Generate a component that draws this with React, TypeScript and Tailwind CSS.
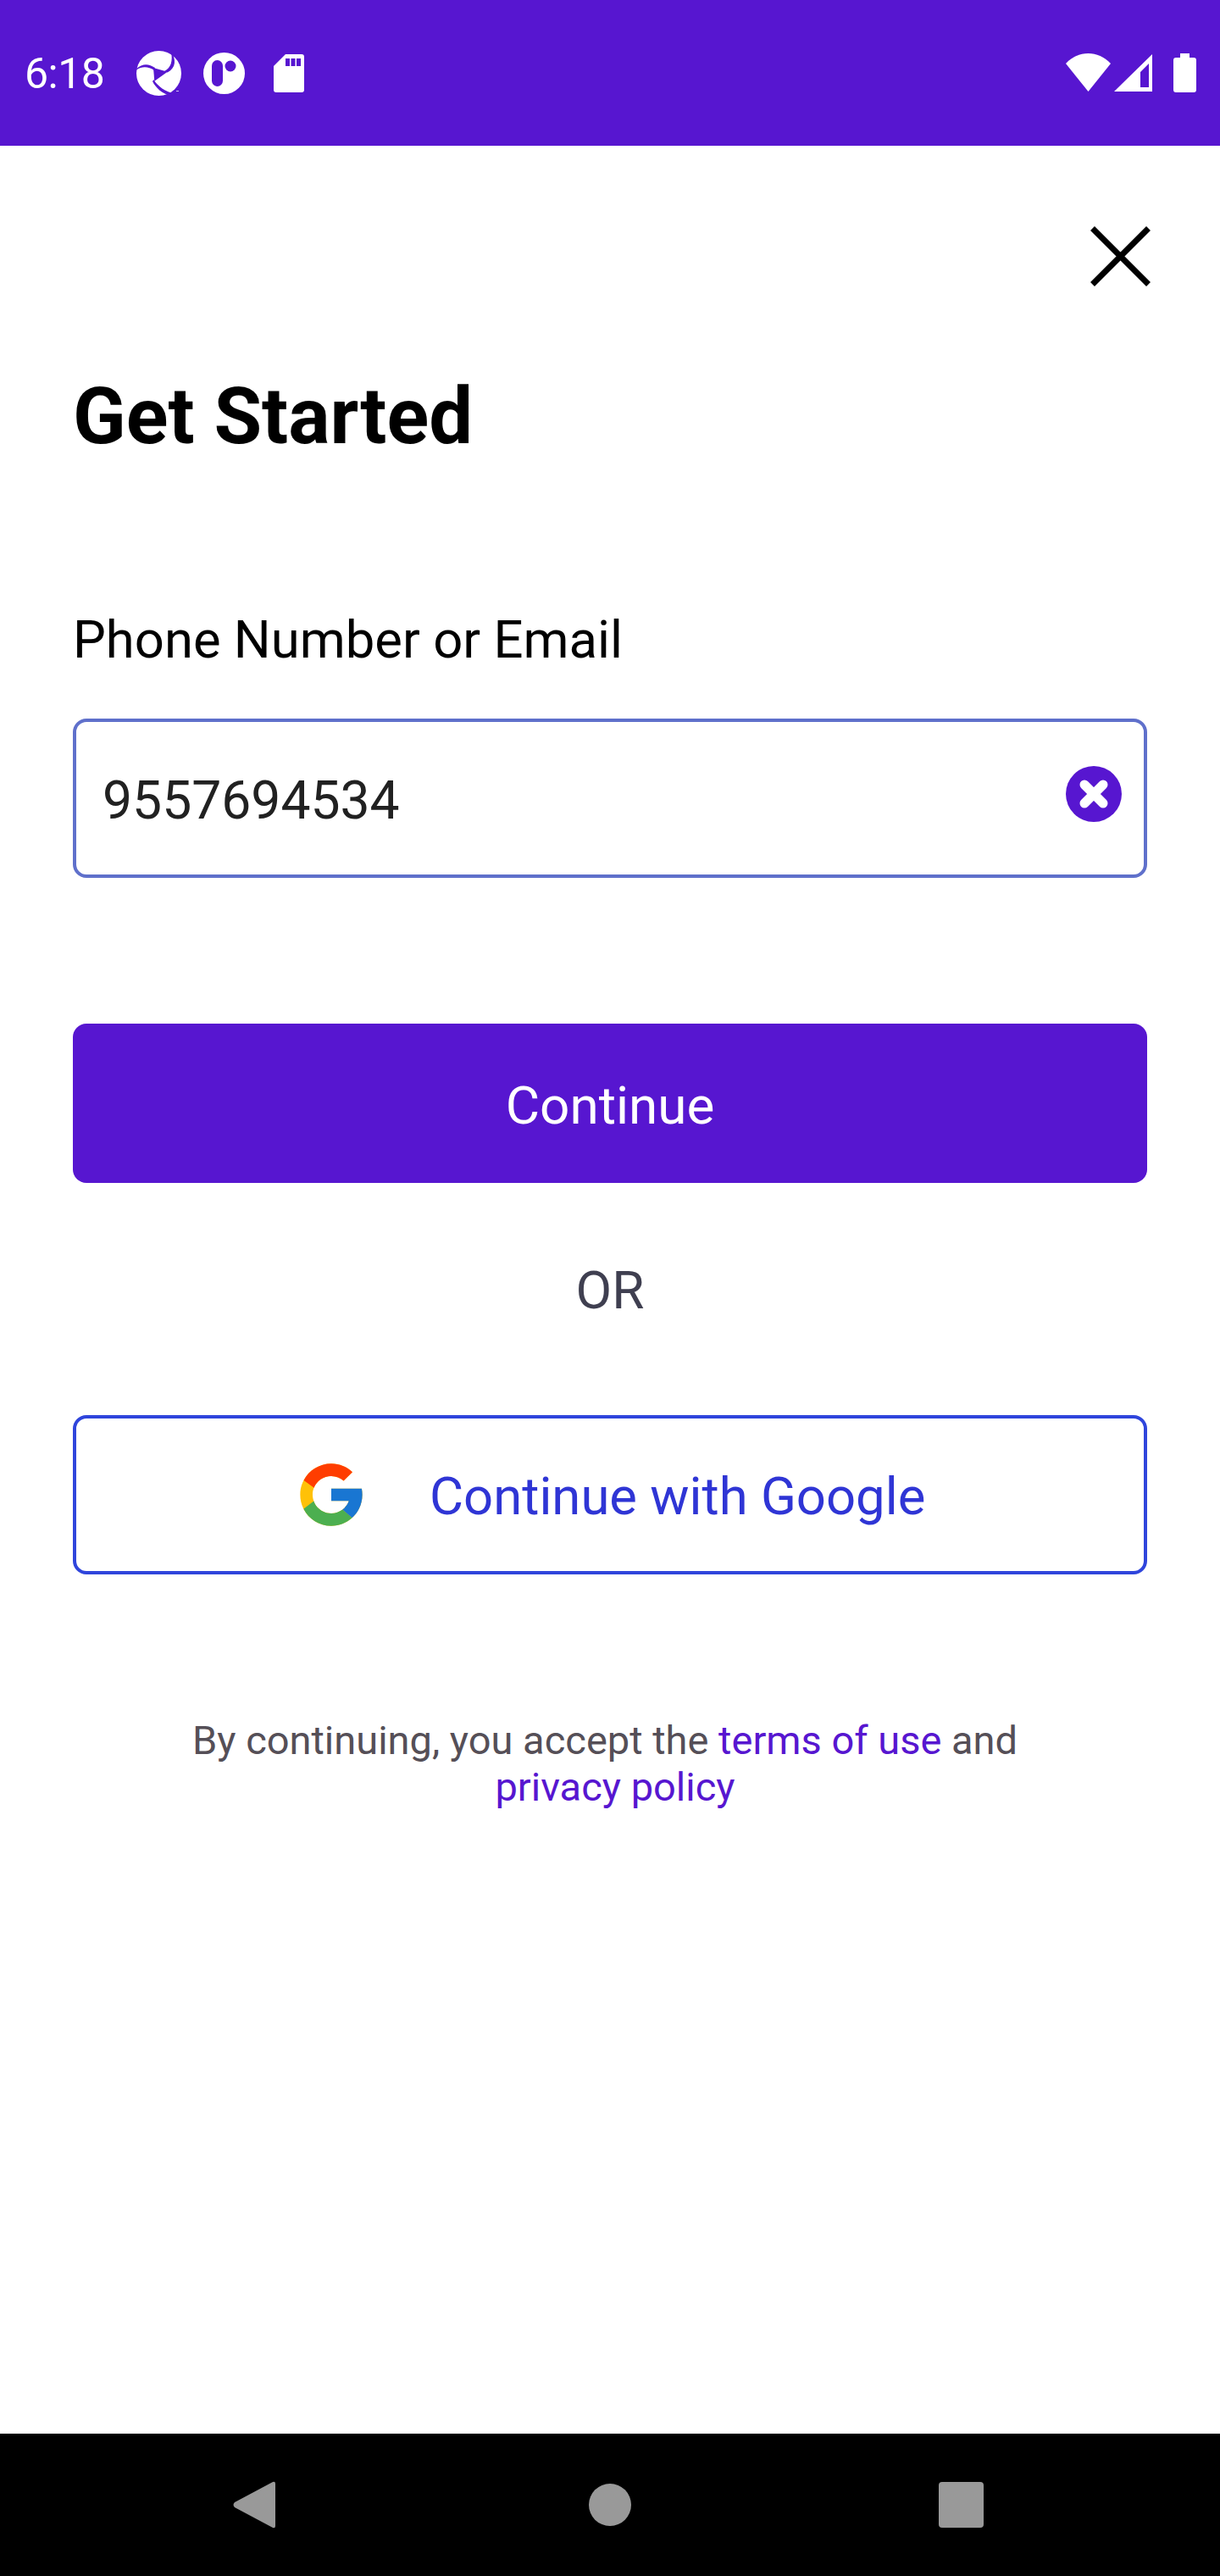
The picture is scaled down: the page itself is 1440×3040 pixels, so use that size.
import React from "react";

const PURPLE = "#5716d0";

function StatusBar() {
  return (
    <div className="h-[172px] shrink-0 bg-[#5716d0] flex items-start text-white">
      <span className="ml-[29px] mt-[62px] text-[50px] leading-[50px] tracking-[-0.5px] w-[132px] shrink-0">6:18</span>
      <svg className="mt-[60px] shrink-0 overflow-visible" width="53" height="53" viewBox="0 0 53 53">
        <circle cx="26.5" cy="26.5" r="26.5" fill="white" />
        <path d="M20 20 L36.7 24.7 L21.3 35.7Z" fill="#5716d0" />
        <path d="M0 21 C7 15 14 14.5 22 20 L21 23 C14 18.5 7 18 0 22.5Z" fill="#5716d0" />
        <path d="M41 1 C47 10 47 20 36.7 25.5 L33 24 C41 20 43 12 41 1Z" fill="#5716d0" />
        <path d="M20.5 34 C25 42 34 48 46 51 L40 53 C30 50 23 44 19 36Z" fill="#5716d0" />
        <rect x="47" y="47" width="3" height="1" fill="white" opacity="0.7" />
      </svg>
      <svg className="ml-[26px] mt-[62px] shrink-0" width="49" height="49" viewBox="0 0 49 49">
        <circle cx="24.5" cy="24.5" r="24.5" fill="white" />
        <rect x="10" y="9" width="13" height="31" rx="6.5" fill="#5716d0" />
        <circle cx="32" cy="16" r="6.5" fill="#5716d0" />
      </svg>
      <svg className="ml-[34px] mt-[64px] shrink-0" width="36" height="45" viewBox="0 0 36 45">
        <path d="M14 0 H33 Q36 0 36 3 V42 Q36 45 33 45 H3 Q0 45 0 42 V14Z" fill="white" />
        <rect x="14" y="5" width="5" height="9" fill="#5716d0" />
        <rect x="20.5" y="5" width="5" height="9" fill="#5716d0" />
        <rect x="27" y="5" width="5" height="9" fill="#5716d0" />
      </svg>
      <div className="ml-auto mr-[28px] mt-[63px] flex items-start">
        <svg className="shrink-0" width="53" height="45" viewBox="0 0 53 45">
          <path d="M0 12 C15 -4 38 -4 53 12 L26.5 45Z" fill="white" />
        </svg>
        <svg className="ml-[4px] mt-[1px] shrink-0" width="45" height="44" viewBox="0 0 45 44">
          <path fillRule="evenodd" d="M45 0 V44 H0Z M31 21 V39 H41 V11Z" fill="white" />
        </svg>
        <svg className="ml-[25px] shrink-0" width="27" height="46" viewBox="0 0 27 46">
          <path d="M8 0 H19 V5 H24 Q27 5 27 8 V43 Q27 46 24 46 H3 Q0 46 0 43 V8 Q0 5 3 5 H8Z" fill="white" />
        </svg>
      </div>
    </div>
  );
}

function GoogleLogo() {
  return (
    <svg width="88" height="88" viewBox="0 0 48 48" className="shrink-0">
      <path fill="#FFC107" d="M43.611,20.083H42V20H24v8h11.303c-1.649,4.657-6.08,8-11.303,8c-6.627,0-12-5.373-12-12c0-6.627,5.373-12,12-12c3.059,0,5.842,1.154,7.961,3.039l5.657-5.657C34.046,6.053,29.268,4,24,4C12.955,4,4,12.955,4,24c0,11.045,8.955,20,20,20c11.045,0,20-8.955,20-20C44,22.659,43.862,21.35,43.611,20.083z" />
      <path fill="#FF3D00" d="M6.306,14.691l6.571,4.819C14.655,15.108,18.961,12,24,12c3.059,0,5.842,1.154,7.961,3.039l5.657-5.657C34.046,6.053,29.268,4,24,4C16.318,4,9.656,8.337,6.306,14.691z" />
      <path fill="#4CAF50" d="M24,44c5.166,0,9.86-1.977,13.409-5.192l-6.19-5.238C29.211,35.091,26.715,36,24,36c-5.202,0-9.619-3.317-11.283-7.946l-6.522,5.025C9.505,39.556,16.227,44,24,44z" />
      <path fill="#1976D2" d="M43.611,20.083H42V20H24v8h11.303c-0.792,2.237-2.231,4.166-4.087,5.571c0.001-0.001,0.002-0.001,0.003-0.002l6.19,5.238C36.971,39.205,44,34,44,24C44,22.659,43.862,21.35,43.611,20.083z" />
    </svg>
  );
}

export default function App() {
  return (
    <div className="w-[1440px] h-[3040px] flex flex-col bg-white overflow-hidden font-['Roboto',sans-serif]">
      <StatusBar />
      <main className="flex-1 flex flex-col px-[86px]">
        <div className="flex justify-end pt-[95px] -mr-[4px]">
          <svg width="71" height="71" viewBox="0 0 71 71">
            <path d="M2.5 2.5 L68.5 68.5 M68.5 2.5 L2.5 68.5" stroke="black" strokeWidth="7" fill="none" />
          </svg>
        </div>
        <h1 className="mt-[102px] text-[92px] leading-[104px] font-bold text-black">Get Started</h1>
        <label className="mt-[175px] text-[61.6px] leading-[72px] text-black">Phone Number or Email</label>
        <div className="mt-[57px] h-[188px] border-[4px] border-[#5f70cb] rounded-[16px] flex items-center pl-[31px] pr-[26px]">
          <span className="flex-1 mt-[6px] text-[62.4px] leading-[72px] text-[#212121]">9557694534</span>
          <svg className="-mt-[10px] shrink-0" width="66" height="66" viewBox="0 0 66 66">
            <circle cx="33" cy="33" r="33" fill={PURPLE} />
            <path d="M22 22 L44 44 M44 22 L22 44" stroke="white" strokeWidth="11" strokeLinecap="round" />
          </svg>
        </div>
        <button className="mt-[172px] h-[188px] rounded-[16px] bg-[#5716d0] text-white text-[62px] leading-[72px] flex items-center justify-center">
          <span className="mt-[6px]">Continue</span>
        </button>
        <div className="mt-[92px] text-center text-[62px] leading-[70px] text-[#3f3f50]">OR</div>
        <button className="mt-[112px] h-[188px] border-[4px] border-[#2f45dc] rounded-[16px] flex items-center pl-[257px]">
          <GoogleLogo />
          <span className="ml-[72px] mt-[4px] text-[61.6px] leading-[72px] text-[#2f35d5]">Continue with Google</span>
        </button>
        <p className="mt-[168px] text-center text-[47px] leading-[55px] text-[#554f57]">
          <span className="block -ml-[12px]">
            By continuing, you accept the <span className="text-[#5716d0]">terms of use</span> and
          </span>
          <span className="block ml-[12px] text-[#5716d0]">privacy policy</span>
        </p>
      </main>
      <div className="h-[168px] shrink-0 bg-black flex items-center justify-center relative">
        <div className="w-[1440px] flex items-center pl-[275px]">
          <svg width="50" height="56" viewBox="0 0 50 56">
            <path d="M47 1 Q50 0 50 3 V53 Q50 56 47 55 L2 31 Q-1 28 2 25Z" fill="#999999" />
          </svg>
          <div className="ml-[370px] w-[50px] h-[50px] rounded-full bg-[#999999]" />
          <div className="ml-[363px] w-[53px] h-[54px] rounded-[4px] bg-[#999999]" />
        </div>
      </div>
    </div>
  );
}
